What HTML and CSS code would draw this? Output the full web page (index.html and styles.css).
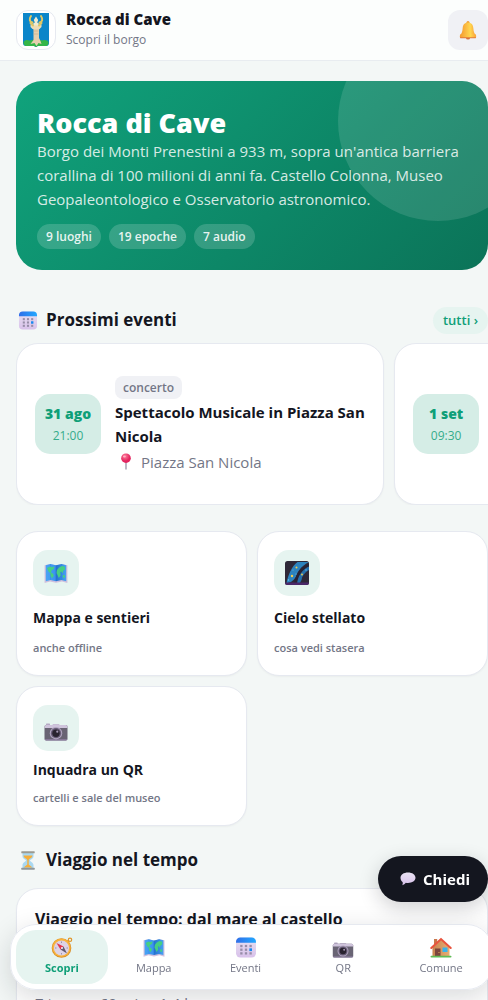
FILE: index.html
```html
<!DOCTYPE html>
<html lang="it">
<head>
    <meta charset="UTF-8">
    <meta name="viewport" content="width=device-width, initial-scale=1">
    <title>Rocca di Cave</title>
    <link rel="stylesheet" href="styles.css">
</head>
<body>
    <!-- shared icons -->
    <svg class="sprite" aria-hidden="true">
        <defs>
            <linearGradient id="gBell" x1="0" x2="1"><stop offset="0" stop-color="#f59a32"/><stop offset=".65" stop-color="#ffd750"/><stop offset="1" stop-color="#f9a13a"/></linearGradient>
            <linearGradient id="gBlue" x1="0" x2="1"><stop offset="0" stop-color="#2f6fe8"/><stop offset="1" stop-color="#22a8ff"/></linearGradient>
            <linearGradient id="gLilac" x1="0" y1="0" x2="0" y2="1"><stop offset="0" stop-color="#e9e2f2"/><stop offset="1" stop-color="#d8c1ea"/></linearGradient>
            <linearGradient id="gSea" x1="0" x2="1"><stop offset="0" stop-color="#48a4f4"/><stop offset=".45" stop-color="#3b92ef"/><stop offset=".52" stop-color="#2673cf"/><stop offset="1" stop-color="#46a2f3"/></linearGradient>
            <radialGradient id="gPin" cx=".4" cy=".3"><stop offset="0" stop-color="#ff7d9c"/><stop offset="1" stop-color="#e3245f"/></radialGradient>
            <linearGradient id="gWall" x1="0" x2="1"><stop offset="0" stop-color="#c8834f"/><stop offset="1" stop-color="#e6ae74"/></linearGradient>
        </defs>
        <symbol id="bell" viewBox="0 0 20 20">
            <circle cx="10" cy="2.6" r="1.5" fill="#ee9a33"/>
            <path d="M8 18h4a2 1.6 0 0 1-4 0z" fill="#d9703b"/>
            <path d="M10 2.6c-3.5 0-5 2.300-5.300 5.500-.3 3.700-1 5.400-2 6.400h14.600c-1-1-1.700-2.700-2-6.400C15 4.900 13.500 2.600 10 2.600z" fill="url(#gBell)"/>
            <path d="M2.700 14h14.600c.9 1 1.100 2.500.6 4H2.100c-.5-1.500-.3-3 .6-4z" fill="url(#gBell)"/>
            <path d="M2 17.200h16l-.3 1H2.300z" fill="#e07a3c"/>
        </symbol>
        <symbol id="calendar" viewBox="0 0 20 20">
            <rect x=".5" y=".5" width="19" height="19" rx="4" fill="url(#gLilac)"/>
            <path d="M.5 5.500v-1a4 4 0 0 1 4-4h11a4 4 0 0 1 4 4v1z" fill="url(#gBlue)"/>
            <g fill="#978da8">
                <rect x="4.500" y="7.500" width="2.200" height="2.200"/><rect x="8.900" y="7.500" width="2.200" height="2.200"/><rect x="13.300" y="7.500" width="2.200" height="2.200"/>
                <rect x="4.500" y="11" width="2.200" height="2.200"/><rect x="8.900" y="11" width="2.200" height="2.200"/>
                <rect x="4.500" y="14.500" width="2.200" height="2.200"/><rect x="8.900" y="14.500" width="2.200" height="2.200"/><rect x="13.300" y="14.500" width="2.200" height="2.200"/>
            </g>
            <rect x="13.200" y="10.800" width="2.500" height="2.600" fill="#1688f0"/>
        </symbol>
        <symbol id="map" viewBox="0 0 24 20">
            <path d="M.6 2.200 6 1l6 1.500L18 1l5.400 1.200V20L18 18.500 12 19.800 6 18.500.6 20z" fill="#cfbfdd"/>
            <path d="M1.800 2.200 6.500 1 12 2.300 17.500 1l4.700 1.200v16L17.500 17 12 18.300 6.500 17l-4.700 1.200z" fill="url(#gSea)"/>
            <path d="M6.500 1v16M17.500 1v16" stroke="#2f80da" stroke-width=".6" opacity=".5"/>
            <path d="M3 5l3-1.500 2 .7 2.500-.9-.8 3-2 .9L7 9.500l2 1.300.9 1.700-1.800 2.800-1.500-2.300-.2-2.700L4.500 8.500z" fill="#46cf82"/>
            <path d="M13 7l2-2.500L18 3l3 .7-.2 3.300-1.500.6-.8 3-1.200-2-1 .5.3 3.200-1.800 2.700L13.500 12l-1-2z" fill="#46cf82"/>
            <path d="M18.500 12.500l2-.8.7 2.600-2 .7z" fill="#46cf82"/>
        </symbol>
        <symbol id="sky" viewBox="0 0 24 24">
            <rect width="24" height="24" rx="2.500" fill="#2e2838"/>
            <path d="M1.500 22C3 14 7 5 12.500 1H24C15 6 12.500 11 11 15.500 8.500 20 5 22 1.500 22z" fill="#2c82bd"/>
            <path d="M11 24c0-9 5-16 13-18.500V9c-4.500 2.500-7 6-7.500 10L14 24z" fill="#2570ad"/>
            <path d="M9 24c1-10 6-18 15-21v2C17 9 12.500 15 12 24z" fill="#272334"/>
            <path d="M0 21.500h24a2.500 2.500 0 0 1-2.500 2.500h-19A2.500 2.500 0 0 1 0 21.500z" fill="#4a2869"/>
            <g fill="#f2ce4c"><circle cx="11.500" cy="6.500" r="1"/><circle cx="7" cy="15" r="1.200"/><circle cx="17" cy="13.500" r=".9"/></g>
            <g fill="#72c6ed"><circle cx="3.500" cy="19" r=".7"/><circle cx="8" cy="9" r=".5"/><circle cx="21" cy="9" r=".7"/><circle cx="11" cy="13" r=".6"/></g>
        </symbol>
        <symbol id="camera" viewBox="0 0 24 18">
            <rect x="2" y=".6" width="4" height="2" rx=".6" fill="#b6a9c4"/>
            <path d="M8 2.500 9 1h6l1 1.500z" fill="#c9bed6"/>
            <rect x=".5" y="2" width="23" height="15.500" rx="1.800" fill="#696474"/>
            <path d="M.5 5V3.800Q.5 2 2.300 2h19.400q1.800 0 1.800 1.800V5z" fill="#cfc4dc"/>
            <path d="M.5 16.300h23q-.3 1.200-1.800 1.200H2.300q-1.500 0-1.800-1.200z" fill="#9281a5"/>
            <circle cx="12" cy="10.200" r="6.200" fill="#b0a4bf"/>
            <circle cx="12" cy="10.200" r="5.100" fill="#665b75"/>
            <circle cx="12" cy="10.200" r="3.700" fill="#29232f"/>
            <circle cx="13.300" cy="8.700" r="1.100" fill="#a497b3"/>
        </symbol>
        <symbol id="pin" viewBox="0 0 12 18">
            <path d="M5.300 9h1.400v8l-.7 1-.7-1z" fill="#9c92a8"/>
            <circle cx="6" cy="5.500" r="5.100" fill="url(#gPin)"/>
            <ellipse cx="4.300" cy="3.700" rx="1.500" ry="1.100" fill="#ffb0c2"/>
        </symbol>
        <symbol id="hourglass" viewBox="0 0 14 19">
            <path d="M1.500 2h11v3.500C12.500 8 9 8.500 9 9.500s3.500 2 3.500 4.500v3h-11v-3c0-2.500 3.500-3.500 3.500-4.500S1.500 8 1.500 5.500z" fill="#a9d8f1"/>
            <path d="M2.500 4.500h9C11.500 7 8 7.500 7.700 9v4.500l3.800 3h-9l3.800-3V9C6 7.500 2.500 7 2.500 4.500z" fill="#f6ae3a"/>
            <rect x=".3" y=".3" width="13.400" height="2" rx=".5" fill="#9c9b91"/>
            <rect x=".3" y="16.700" width="13.400" height="2" rx=".5" fill="#8f979a"/>
        </symbol>
        <symbol id="compass" viewBox="0 0 21 21">
            <circle cx="18.500" cy="2.800" r="1.700" fill="none" stroke="#e0952b" stroke-width="1.200"/>
            <path d="M15 5.500 17.500 3.500" stroke="#e0952b" stroke-width="2"/>
            <circle cx="10" cy="11" r="9.800" fill="#d98c25"/>
            <circle cx="10" cy="10.700" r="9.200" fill="#f8b33c"/>
            <circle cx="10" cy="11" r="7.600" fill="#ddd2e5"/>
            <path d="M10 4.500v1.500M10 16v1.500M3.500 11H5M15 11h1.500" stroke="#8d8199" stroke-width=".8"/>
            <path d="M5 6 12 9.500 9 12.500z" fill="#e2354c"/>
            <path d="M15.500 16.500 9 12.500 12 9.500z" fill="#62586d"/>
            <circle cx="10.500" cy="11" r="1" fill="#f5f1f8"/>
        </symbol>
        <symbol id="house" viewBox="0 0 22 20">
            <rect x="4" y="1.500" width="3.200" height="6" fill="#c9774b"/>
            <path d="M2.500 9.500 11 2l8.500 7.500V19h-17z" fill="url(#gWall)"/>
            <path d="M1.300 10.500 11 1.500l9.700 9" fill="none" stroke="#e9533d" stroke-width="2" stroke-linecap="round"/>
            <rect x="5" y="11" width="5.500" height="8" fill="#7b453c"/>
            <circle cx="9" cy="15" r=".6" fill="#f1bd61"/>
            <rect x="12.500" y="10" width="5" height="4.500" fill="#39b3ec"/>
            <rect x=".5" y="18.200" width="21" height="1.800" rx=".9" fill="#5fbb54"/>
        </symbol>
        <symbol id="bubble" viewBox="0 0 16 14">
            <path d="M8 .5c4.300 0 7.500 2.200 7.500 5.300S12.300 11 8 11c-.8 0-1.500 0-2.200-.2-.8 1.200-2 2-3.600 2.400.6-1 .7-2 .4-3.200C1.300 9 .5 7.600.5 5.800.5 2.700 3.700.5 8 .5z" fill="url(#gLilac)"/>
        </symbol>
    </svg>

    <header class="topbar">
        <div class="crest">
            <svg viewBox="0 0 26 34" aria-hidden="true">
                <path d="M0 0h26v30q0 3-3 3h-8l-2 1-2-1H3q-3 0-3-3z" fill="#0b85c9"/>
                <path d="M.5 29c2-2.500 4-2 6-1.500 5-1.500 10-1.500 13 0 3-1 5 0 6 1.500v1.500q-.5 2.500-3 2.500h-8l-1.500 1-2-1H3Q.5 32.500.5 29z" fill="#35b548"/>
                <path d="M9.500 14h7l-.5 3v8l1.500 3 1 3-3-1-2 3-2-3-4 1 3-4V17z" fill="#e5cfae"/>
                <path d="M7.500 11.500h11V14l-2 2h-7l-2-2z" fill="#eddcb7"/>
                <path d="M8 3c-2 3-1.500 6 1.500 6.500M18 3c2 3 1.500 6-1.500 6.500M10 12.500 7.500 10M16 12.500l2.500-2.500" fill="none" stroke="#e0c765" stroke-width="2" stroke-linecap="round"/>
                <path d="M13 3.500 15.200 7l-1 2.500 1.800 1.300-1.500 1.700h-3L10 10.800l1.800-1.300-1-2.500z" fill="#f1ecd0"/>
                <path d="M10.500 18h5M10.500 21h5" stroke="#c8ac88" stroke-width=".6"/>
            </svg>
        </div>
        <div class="brand">
            <strong>Rocca di Cave</strong>
            <span>Scopri il borgo</span>
        </div>
        <button class="bell" type="button" aria-label="Notifiche"><svg><use href="#bell"/></svg></button>
    </header>

    <main>
        <section class="hero">
            <h1>Rocca di Cave</h1>
            <p>Borgo dei Monti Prenestini a 933 m, sopra un'antica barriera corallina di 100 milioni di anni fa. Castello Colonna, Museo Geopaleontologico e Osservatorio astronomico.</p>
            <div class="chips">
                <span>9 luoghi</span>
                <span>19 epoche</span>
                <span>7 audio</span>
            </div>
        </section>

        <section class="events">
            <div class="section-head">
                <h2><svg class="icon"><use href="#calendar"/></svg>Prossimi eventi</h2>
                <a class="more" href="#eventi">tutti ›</a>
            </div>
            <div class="event-list">
                <article class="event">
                    <div class="date"><b>31 ago</b><span>21:00</span></div>
                    <div class="event-body">
                        <span class="tag">concerto</span>
                        <h3>Spettacolo Musicale in Piazza San Nicola</h3>
                        <p><svg class="pin"><use href="#pin"/></svg>Piazza San Nicola</p>
                    </div>
                </article>
                <article class="event">
                    <div class="date"><b>1 set</b><span>09:30</span></div>
                </article>
            </div>
        </section>

        <section class="tiles">
            <a class="tile" href="#mappa">
                <span class="tile-icon"><svg><use href="#map"/></svg></span>
                <strong>Mappa e sentieri</strong>
                <small>anche offline</small>
            </a>
            <a class="tile" href="#cielo">
                <span class="tile-icon"><svg><use href="#sky"/></svg></span>
                <strong>Cielo stellato</strong>
                <small>cosa vedi stasera</small>
            </a>
            <a class="tile" href="#qr">
                <span class="tile-icon low"><svg><use href="#camera"/></svg></span>
                <strong>Inquadra un QR</strong>
                <small>cartelli e sale del museo</small>
            </a>
        </section>

        <section class="journey">
            <div class="section-head">
                <h2><svg class="icon"><use href="#hourglass"/></svg>Viaggio nel tempo</h2>
            </div>
            <article class="journey-card">
                <h3>Viaggio nel tempo: dal mare al castello</h3>
                <p>7 tappe · 60 min · 1.4 km</p>
            </article>
        </section>
    </main>

    <button class="ask" type="button"><svg><use href="#bubble"/></svg>Chiedi</button>

    <nav class="tabbar">
        <a class="active" href="#scopri"><svg><use href="#compass"/></svg>Scopri</a>
        <a href="#mappa"><svg><use href="#map"/></svg>Mappa</a>
        <a href="#eventi"><svg><use href="#calendar"/></svg>Eventi</a>
        <a href="#qr"><svg class="flat"><use href="#camera"/></svg>QR</a>
        <a href="#comune"><svg><use href="#house"/></svg>Comune</a>
    </nav>
</body>
</html>
```

FILE: styles.css
```css
:root {
    --green: #0f9f78;
    --mint: #e6f4f0;
    --ink: #14161f;
    --muted: #737686;
    --line: #e6e9f0;
}
* {
    box-sizing: border-box;
}
html {
    scrollbar-width: none;
}
body {
    margin: 0;
    overflow-x: hidden;
    background: #f3f7f6;
    color: var(--ink);
    font-family: "Open Sans", "Noto Sans", sans-serif;
    font-size: 15px;
    line-height: 24px;
}
h1, h2, h3, p {
    margin: 0;
}
a {
    color: inherit;
    text-decoration: none;
}
button {
    border: 0;
    font: inherit;
    cursor: pointer;
}
.sprite {
    position: absolute;
    width: 0;
    height: 0;
}

/* top bar */
.topbar {
    display: flex;
    align-items: center;
    height: 61px;
    padding-left: 16px;
    background: #fcfefd;
    border-bottom: 1px solid #e8ecf0;
}
.crest {
    display: grid;
    place-items: center;
    width: 40px;
    height: 40px;
    border: 1px solid var(--line);
    border-radius: 12px;
    background: #fff;
}
.crest svg {
    width: 26px;
    height: 34px;
}
.brand {
    display: flex;
    flex-direction: column;
    flex: 1;
    margin-left: 10px;
}
.brand strong {
    font-size: 15px;
    font-weight: 800;
    line-height: 20px;
}
.brand span {
    color: var(--muted);
    font-size: 12px;
    font-weight: 500;
    line-height: 22px;
}
.bell {
    display: grid;
    place-items: center;
    width: 40px;
    height: 40px;
    padding: 0;
    border-radius: 12px;
    background: #f0f1f5;
}
.bell svg {
    width: 20px;
    height: 20px;
}

main {
    padding: 20px 0 100px 16px;
}

/* hero */
.hero {
    position: relative;
    overflow: hidden;
    padding: 26px 21px 21px;
    border-radius: 26px;
    background: linear-gradient(135deg, #10a37c, #0b7358);
    color: #fff;
}
.hero::after {
    content: "";
    position: absolute;
    top: -60px;
    right: -50px;
    width: 200px;
    height: 200px;
    border-radius: 50%;
    background: rgba(255, 255, 255, .12);
}
.hero h1 {
    font-size: 27px;
    font-weight: 800;
    line-height: 32px;
}
.hero p {
    color: rgba(255, 255, 255, .84);
}
.chips {
    display: flex;
    gap: 8px;
    margin-top: 13px;
}
.chips span {
    padding: 0 9px;
    border-radius: 13px;
    background: rgba(255, 255, 255, .17);
    color: rgba(255, 255, 255, .9);
    font-size: 12px;
    font-weight: 600;
    line-height: 25px;
}

/* section titles */
.section-head {
    display: flex;
    align-items: center;
    justify-content: space-between;
    height: 28px;
    margin-bottom: 9px;
}
.section-head h2 {
    display: flex;
    align-items: center;
    gap: 8px;
    padding-left: 2px;
    font-size: 17px;
    font-weight: 700;
}
.icon {
    width: 20px;
    height: 19px;
}
.more {
    padding: 0 10px;
    border-radius: 14px;
    background: var(--mint);
    color: var(--green);
    font-size: 13px;
    font-weight: 600;
    line-height: 27px;
}

/* events */
.events {
    margin-top: 36px;
}
.event-list {
    display: flex;
    gap: 10px;
    overflow: hidden;
}
.event {
    display: flex;
    align-items: center;
    flex: 0 0 78%;
    gap: 14px;
    min-height: 162px;
    padding: 18px;
}
.event, .tile, .journey-card {
    border: 1px solid var(--line);
    border-radius: 22px;
    background: #fff;
    box-shadow: 0 1px 2px rgba(20, 22, 31, .04);
}
.date {
    display: flex;
    flex-direction: column;
    justify-content: center;
    flex: 0 0 66px;
    height: 60px;
    border-radius: 15px;
    background: #d5ede6;
    color: var(--green);
    text-align: center;
}
.date b {
    font-size: 14px;
    font-weight: 800;
    line-height: 22px;
}
.date span {
    color: #35ac8b;
    font-size: 12px;
    font-weight: 500;
    line-height: 21px;
}
.tag {
    display: inline-block;
    padding: 0 8px;
    border-radius: 8px;
    background: #f0f1f5;
    color: var(--muted);
    font-size: 12px;
    font-weight: 600;
    line-height: 23px;
    vertical-align: bottom;
}
.event h3 {
    margin-top: 1px;
    font-size: 15px;
    font-weight: 700;
}
.event p {
    display: flex;
    align-items: center;
    gap: 9px;
    margin-top: 2px;
    padding-left: 5px;
    color: var(--muted);
}
.pin {
    width: 12px;
    height: 17px;
}

/* tiles */
.tiles {
    display: grid;
    grid-template-columns: 1fr 1fr;
    grid-template-rows: minmax(145px, auto) minmax(140px, auto);
    gap: 10px;
    margin-top: 26px;
}
.tile {
    display: flex;
    flex-direction: column;
    justify-content: space-between;
    padding: 18px 16px;
}
.tile-icon {
    display: grid;
    place-items: center;
    width: 46px;
    height: 46px;
    border-radius: 15px;
    background: var(--mint);
}
.tile-icon.low {
    padding-top: 8px;
}
.tile-icon svg {
    width: 24px;
    height: 24px;
}
.tile-icon.low svg {
    height: 18px;
}
.tile strong {
    font-size: 14px;
    font-weight: 700;
}
.tile small {
    color: var(--muted);
    font-size: 11px;
    font-weight: 600;
    line-height: 18px;
}

/* journey */
.journey {
    margin-top: 20px;
}
.journey .section-head {
    margin-bottom: 14px;
}
.journey-card {
    padding: 18px;
}
.journey-card h3 {
    font-size: 16px;
    font-weight: 700;
}
.journey-card p {
    margin-top: 60px;
    color: var(--muted);
}

/* floating controls */
.ask {
    position: fixed;
    right: 0;
    bottom: 98px;
    z-index: 2;
    display: flex;
    align-items: center;
    gap: 7px;
    height: 46px;
    padding: 0 18px 0 22px;
    border-radius: 23px;
    background: var(--ink);
    color: #fff;
    font-weight: 700;
    box-shadow: 0 6px 20px rgba(20, 22, 31, .2);
}
.ask svg {
    width: 16px;
    height: 14px;
}
.tabbar {
    position: fixed;
    right: -5px;
    bottom: 10px;
    left: 10px;
    display: grid;
    grid-template-columns: 23fr 23fr 23fr 26fr 23fr;
    padding: 5px;
    border: 1px solid var(--line);
    border-radius: 26px;
    background: rgba(255, 255, 255, .95);
    backdrop-filter: blur(16px);
    box-shadow: 0 8px 28px rgba(20, 22, 31, .16);
}
.tabbar a {
    display: flex;
    flex-direction: column;
    align-items: center;
    justify-content: center;
    gap: 1px;
    height: 54px;
    border-radius: 20px;
    color: var(--muted);
    font-size: 11px;
    font-weight: 500;
    line-height: 18px;
}
.tabbar .active {
    background: var(--mint);
    color: var(--green);
    font-weight: 700;
}
.tabbar svg {
    width: 22px;
    height: 21px;
}
.tabbar .flat {
    height: 16px;
    margin-top: 5px;
}
```
